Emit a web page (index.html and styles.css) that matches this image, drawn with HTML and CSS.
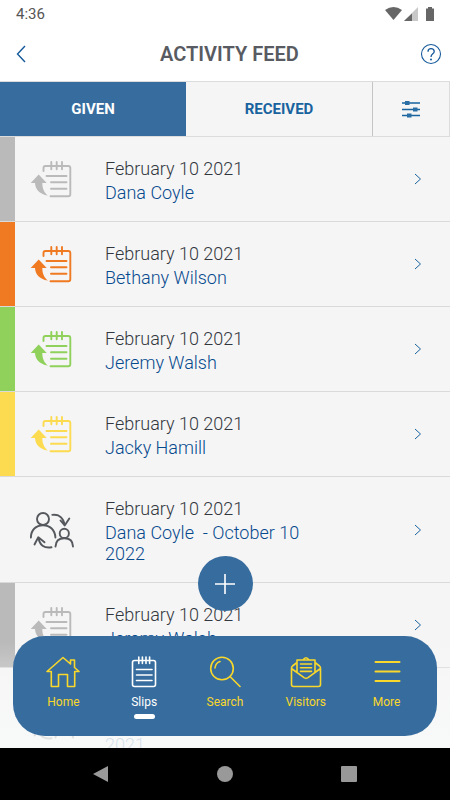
FILE: index.html
```html
<!DOCTYPE html>
<html lang="en">
<head>
<meta charset="utf-8">
<meta name="viewport" content="width=device-width, initial-scale=1">
<title>Activity Feed</title>
<link rel="stylesheet" href="styles.css">
</head>
<body>
<svg class="sprite" aria-hidden="true">
  <symbol id="slip" viewBox="0 0 42 38">
    <path d="M13.500 11V8a2 2 0 0 1 2-2H38.300a2 2 0 0 1 2 2V34.300a2 2 0 0 1-2 2H20.500M16.500 16H36.500M21 22.300H36.500M21 28.700H36.500M21.300 2V9.300M26.700 2V9.300M32 2V9.300" fill="none" stroke="currentColor" stroke-width="1.900" stroke-linecap="round"/>
    <path d="M8.700 14.500L.7 22.900H5C5.300 29 9 34 18 35.500C14 32.500 12.300 28 12.300 22.900H16.700Z" fill="currentColor"/>
  </symbol>
  <symbol id="people" viewBox="0 0 44 40">
    <g fill="none" stroke="currentColor" stroke-width="1.900" stroke-linecap="round" stroke-linejoin="round">
      <circle cx="13" cy="9" r="6"/><path d="M.9 27.500C1 20 6 15.200 13 15.200S25 20 25.400 27.500"/>
      <circle cx="34.300" cy="23.400" r="4.600"/><path d="M25.500 36.500C25.700 31 29 28.200 34.300 28.200S42.900 31 43 36.500"/>
      <path d="M22.300 4.900C29 4 33.500 8 34.700 15.300M30.500 10.500L34.700 15.500L39.300 8.500"/>
      <path d="M21.500 37.300C14 38.500 9.500 35 8.500 27.500M4.500 34.500L8.300 27.300L14.500 32.300"/>
    </g>
  </symbol>
  <symbol id="chevron" viewBox="0 0 8 12"><path d="M1 1L6.500 6L1 11" fill="none" stroke="currentColor" stroke-width="1"/></symbol>
</svg>
<div class="app">
  <div class="status">
    <span>4:36</span>
    <svg class="status-icons" viewBox="0 0 50 16" aria-hidden="true">
      <path d="M0 4Q8.500-2 17 4L8.500 14Z" fill="#666"/>
      <path d="M33 1V15H19Z" fill="#c8c8c8"/><path d="M27 7.500V15H19Z" fill="#666"/>
      <path d="M43 1H47V2.500H49V15H41V2.500H43Z" fill="#666"/>
    </svg>
  </div>
  <header class="header">
    <button class="icon-button" aria-label="Back"><svg class="back" viewBox="0 0 10 18"><path d="M9 1L1.500 9L9 17" fill="none" stroke="currentColor" stroke-width="1.400"/></svg></button>
    <h1>ACTIVITY FEED</h1>
    <button class="icon-button" aria-label="Help"><svg class="help" viewBox="0 0 22 22"><circle cx="11" cy="11" r="9.500" fill="none" stroke="currentColor" stroke-width="1.100"/><path d="M8 8.700C8 6.500 9.200 5.600 11 5.600S14.200 6.600 14.200 8.500C14.200 11 11 10.800 11 14" fill="none" stroke="currentColor" stroke-width="1.300"/><circle cx="11" cy="16.400" r="1" fill="currentColor"/></svg></button>
  </header>
  <div class="tabs">
    <button class="tab active">GIVEN</button>
    <button class="tab">RECEIVED</button>
    <button class="filter" aria-label="Filter"><svg viewBox="0 0 20 20"><path d="M1 4H19M1 10.500H19M1 16.500H19" stroke="currentColor" stroke-width="1.300"/><path d="M4 2H8.500V6H4ZM12 8.500H16.500V12.500H12ZM6 14.500H10.500V18.500H6Z" fill="#2a6ea6"/></svg></button>
  </div>
  <main class="feed">
    <a class="row gray" href="#"><svg class="slip"><use href="#slip"/></svg><span class="text"><span class="date">February 10 2021</span><span class="name">Dana Coyle</span></span><svg class="chevron"><use href="#chevron"/></svg></a>
    <a class="row orange" href="#"><svg class="slip"><use href="#slip"/></svg><span class="text"><span class="date">February 10 2021</span><span class="name">Bethany Wilson</span></span><svg class="chevron"><use href="#chevron"/></svg></a>
    <a class="row green" href="#"><svg class="slip"><use href="#slip"/></svg><span class="text"><span class="date">February 10 2021</span><span class="name">Jeremy Walsh</span></span><svg class="chevron"><use href="#chevron"/></svg></a>
    <a class="row yellow" href="#"><svg class="slip"><use href="#slip"/></svg><span class="text"><span class="date">February 10 2021</span><span class="name">Jacky Hamill</span></span><svg class="chevron"><use href="#chevron"/></svg></a>
    <a class="row meeting" href="#"><svg class="people"><use href="#people"/></svg><span class="text"><span class="date">February 10 2021</span><span class="name">Dana Coyle&nbsp; - October 10 2022</span></span><svg class="chevron"><use href="#chevron"/></svg></a>
    <a class="row gray" href="#"><svg class="slip"><use href="#slip"/></svg><span class="text"><span class="date">February 10 2021</span><span class="name">Jeremy Walsh</span></span><svg class="chevron"><use href="#chevron"/></svg></a>
    <a class="row meeting" href="#"><svg class="people"><use href="#people"/></svg><span class="text"><span class="date">February 10 2021</span><span class="name">Dana Coyle&nbsp; - February 10 2021</span></span><svg class="chevron"><use href="#chevron"/></svg></a>
  </main>
  <div class="dock">
    <button class="add" aria-label="Add"><svg viewBox="0 0 20 20"><path d="M10 0V20M0 10H20" stroke="currentColor" stroke-width="1.600"/></svg></button>
    <nav class="menu">
      <a href="#"><svg viewBox="0 0 34 32"><path d="M1 15.500L17 1.500L24.500 8V4H28.500V11.500L33 15.500H28.700V30.500H21.500V18.500H12.500V30.500H5.300V15.500Z"/></svg><span>Home</span></a>
      <a class="current" href="#"><svg viewBox="0 0 34 32"><rect x="5.500" y="4.500" width="23" height="26" rx="2"/><path d="M9.500 13.500H25M9.500 19H25M9.500 24.500H25M11.800 1V7.500M15.400 1V7.500M19 1V7.500M22.600 1V7.500"/></svg><span>Slips</span></a>
      <a href="#"><svg viewBox="0 0 34 32"><circle cx="14" cy="12.500" r="11.300"/><path d="M22 20.500L32 30.500M7 12Q7.500 7 12 5.500"/></svg><span>Search</span></a>
      <a href="#"><svg viewBox="0 0 34 32"><path d="M8 6.500L3.500 10Q2.500 11 2.500 12V28.500Q2.500 30.500 4.500 30.500H29.500Q31.500 30.500 31.500 28.500V12Q31.500 11 30.500 10L26 6.500M2.500 12.500L15 21.700Q17 23 19 21.700L31.500 12.500M8 16V4H26V16M14 4Q17-.5 20 4M11.500 8H22.500M11.500 11.700H22.500M11.500 15.400H22.500"/></svg><span>Visitors</span></a>
      <a href="#"><svg viewBox="0 0 34 32"><path class="bold" d="M5.500 6H29.500M5.500 15.500H29.500M5.500 25H29.500"/></svg><span>More</span></a>
    </nav>
  </div>
  <div class="system">
    <button aria-label="System back"><svg viewBox="0 0 18 18"><path d="M16 1V17L1 9Z"/></svg></button>
    <button aria-label="System home"><svg viewBox="0 0 18 18"><circle cx="9" cy="9" r="8"/></svg></button>
    <button aria-label="Recent apps"><svg viewBox="0 0 18 18"><rect x="1" y="1" width="16" height="16" rx="1"/></svg></button>
  </div>
</div>
</body>
</html>
```

FILE: styles.css
```css
* { box-sizing: border-box; }
body { margin: 0; font-family: Roboto, "Liberation Sans", sans-serif; color: #4b4f56; background: #fff; }
button { border: 0; padding: 0; background: none; font: inherit; color: inherit; }
a { color: inherit; text-decoration: none; }
svg { display: block; flex: none; }
.sprite { position: absolute; width: 0; height: 0; }
.app { position: relative; display: flex; flex-direction: column; height: 100vh; overflow: hidden; }
.status { display: flex; flex: none; justify-content: space-between; align-items: center; height: 27px; padding: 0 15px 0 16px; font-size: 15px; color: #555; }
.status-icons { width: 50px; height: 16px; }
.header { display: flex; flex: none; align-items: center; justify-content: space-between; height: 54px; padding: 0 7px 0 16px; color: #15599b; }
.header h1 { margin: 0; font-size: 20px; font-weight: 600; line-height: 24px; color: #585b61; }
.icon-button { display: flex; align-items: center; justify-content: center; width: 24px; height: 40px; }
.icon-button:first-child { justify-content: flex-start; }
.back { width: 10px; height: 18px; }
.help { width: 22px; height: 22px; }
.tabs { display: flex; flex: none; height: 56px; background: #f5f5f5; border: solid #dcdcdc; border-width: 1px 1px 1px 0; color: #19639f; font-size: 15px; font-weight: 700; }
.tab { flex: 1; }
.active { background: #376d9e; color: #fff; }
.filter { display: flex; align-items: center; justify-content: center; width: 77px; border-left: 1px solid #c4c4c4; }
.filter svg { width: 20px; height: 20px; }
.feed { flex: 1; min-height: 0; overflow: hidden; background: #f5f5f5; }
.row { display: flex; align-items: center; min-height: 85px; padding: 18px 28px 18px 30px; border-bottom: 1px solid #dadada; background: linear-gradient(currentColor, currentColor) left / 15px 100% no-repeat; }
.gray { color: #bababa; }
.orange { color: #f07a22; }
.green { color: #8fd15b; }
.yellow { color: #fcdb50; }
.meeting { color: #55585d; background: none; }
.people { width: 44px; height: 40px; }
.slip { width: 42px; height: 38px; margin-right: 2px; }
.text { flex: 1; margin-left: 31px; max-width: 220px; font-size: 18px; font-weight: 300; }
.date, .name { display: block; }
.date { line-height: 27px; color: #33373e; }
.name { line-height: 21px; color: #064a8e; }
.chevron { width: 8px; height: 12px; margin-left: auto; color: #19639f; }
.dock { position: absolute; left: 0; right: 0; bottom: 52px; display: flex; flex-direction: column; align-items: center; padding: 0 13px 12px; background: linear-gradient(transparent 45%, rgba(248, 250, 249, .85) 95%); }
.add { display: flex; align-items: center; justify-content: center; width: 55px; height: 55px; margin-bottom: 25px; border-radius: 50%; background: #376d9e; color: #fff; }
.add svg { width: 20px; height: 20px; }
.menu { display: flex; align-self: stretch; height: 100px; padding: 20px 10px 0; border-radius: 32px; background: #376d9e; color: #f9d72b; font-size: 12px; }
.menu a { flex: 1; display: flex; flex-direction: column; align-items: center; gap: 6px; line-height: 16px; }
.menu svg { width: 34px; height: 32px; fill: none; stroke: currentColor; stroke-width: 1.6; stroke-linecap: round; stroke-linejoin: round; }
.menu .bold { stroke-width: 2; }
.menu .current { color: #fff; }
.current::after { content: ""; width: 21px; height: 5px; margin-top: -2px; border-radius: 3px; background: #fff; }
.system { display: flex; flex: none; align-items: center; justify-content: center; gap: 106px; height: 52px; background: #000; }
.system svg { width: 18px; height: 18px; fill: #999; }
```
